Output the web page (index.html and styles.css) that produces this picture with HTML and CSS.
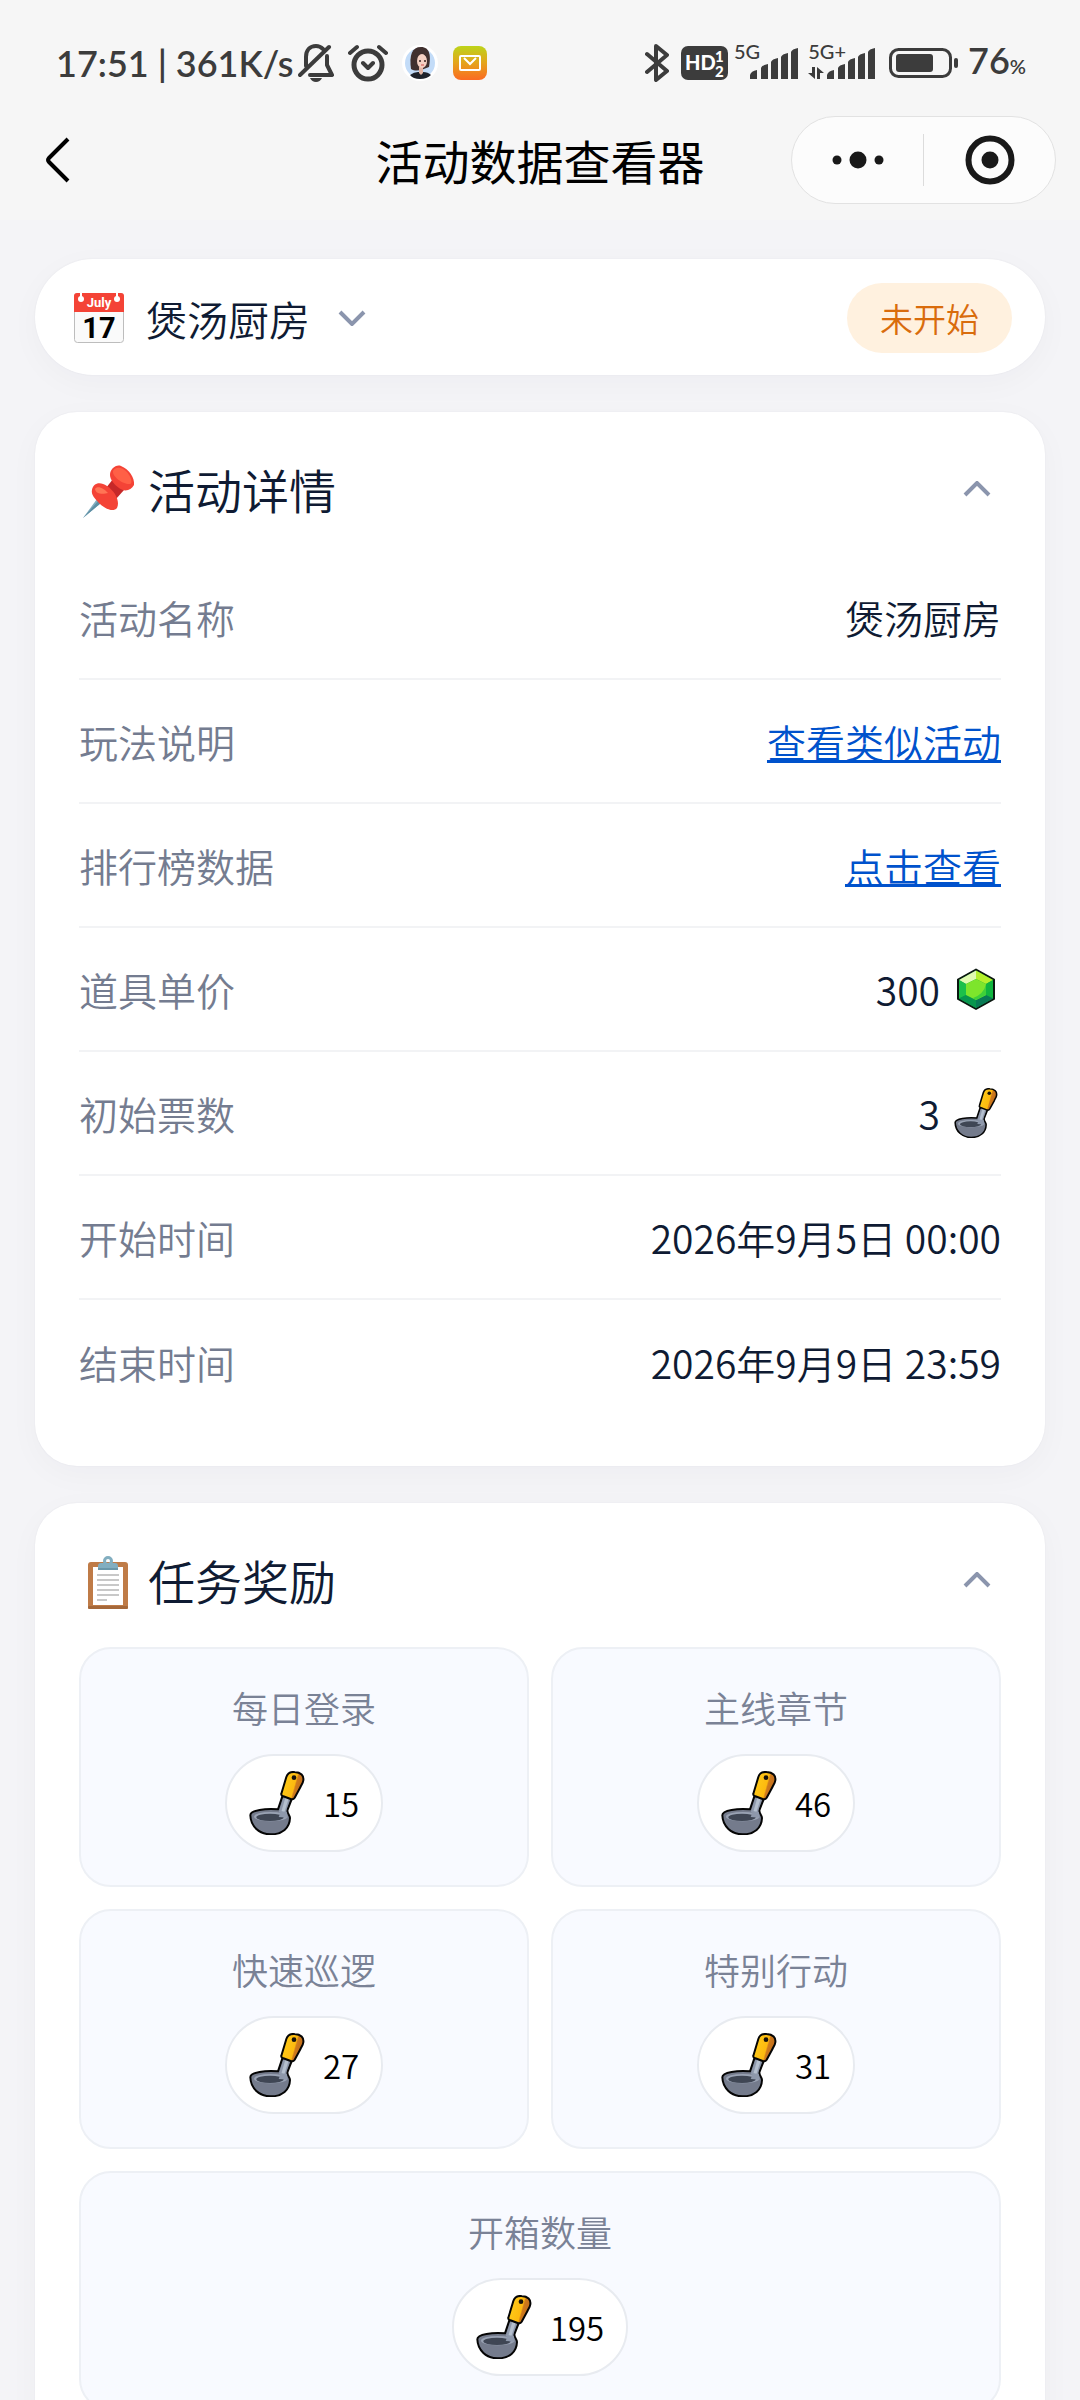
FILE: index.html
```html
<!DOCTYPE html>
<html lang="zh-CN">
<head>
<meta charset="utf-8">
<meta name="viewport" content="width=device-width, initial-scale=1">
<title>活动数据查看器</title>
<link rel="stylesheet" href="styles.css">
</head>
<body>
<svg class="defs" width="0" height="0" aria-hidden="true">
  <defs>
    <linearGradient id="handle" x1="0" y1="0" x2="1" y2="0.35">
      <stop offset="0" stop-color="#ffd21c"/><stop offset="0.68" stop-color="#fdb90f"/><stop offset="0.74" stop-color="#cf7a1c"/><stop offset="1" stop-color="#c06d1c"/>
    </linearGradient>
    <linearGradient id="mail" x1="0" y1="0" x2="0" y2="1">
      <stop offset="0" stop-color="#bdd41a"/><stop offset="0.5" stop-color="#e5a41c"/><stop offset="1" stop-color="#fb6a22"/>
    </linearGradient>
    <symbol id="ladle" viewBox="72 66 192 192">
      <path d="M184 142 L171 181 C135 178 87 183 88 199 C89 232 115 256 149 256 C184 256 206 237 207 207 C207 198 199 196 199 184 L213 148 Z" fill="#747b8c" stroke="#050505" stroke-width="6" stroke-linejoin="round"/>
      <path d="M188 143 L173 190 L196 196 C194 186 197 180 208 148 Z" fill="#8e98ab"/>
      <path d="M193 146 L181 188 L190 190 L203 149 Z" fill="#b4bfce"/>
      <ellipse cx="149" cy="203" rx="50" ry="14" fill="#9aa3b4"/>
      <ellipse cx="147" cy="205" rx="41" ry="11" fill="#3f4654"/>
      <path d="M173 204 L180 186 L198 190 L200 206 Z" fill="#8e98ab"/>
      <path d="M181 134 L196 84 C200 71 210 68 221 69 C240 70 249 80 247 94 C246 102 241 108 238 115 L221 146 C218 151 214 152 209 150 L185 141 C181 139 180 137 181 134 Z" fill="url(#handle)" stroke="#050505" stroke-width="6" stroke-linejoin="round"/>
      <circle cx="219" cy="86" r="7" fill="#17110a"/>
    </symbol>
    <symbol id="chevron" viewBox="0 0 28 16">
      <path d="M2 2 L14 14 L26 2" fill="none" stroke="#8b95ad" stroke-width="4"/>
    </symbol>
    <symbol id="signal" viewBox="0 0 48 31">
      <path d="M0 31V27Q1 23 7 22V31ZM11 31V20Q12 17 18 16V31ZM21 31V14Q22 11 28 10V31ZM31 31V9Q32 6 38 5V31ZM41 31V4Q42 1 48 0V31Z" fill="#3c3c3c"/>
    </symbol>
  </defs>
</svg>

<header class="top">
  <div class="status">
    <div class="status-side">
      <span class="clock">17:51 | 361K/s</span>
      <svg class="bell" width="36" height="38" viewBox="0 0 36 38" fill="none" stroke="#3c3c3c" stroke-width="4" stroke-linecap="round" stroke-linejoin="round">
        <path d="M8 22V13C8 6 12 2 18 2C21 2 23 3 25 5M29 12V21L34 31H12"/><path d="M31 3L2 31"/><path d="M12 34H24Q22 38 18 38T12 34Z" fill="#3c3c3c" stroke="none"/>
      </svg>
      <svg class="alarm" width="40" height="38" viewBox="0 0 40 38" fill="none" stroke="#3c3c3c" stroke-linecap="round" stroke-linejoin="round">
        <circle cx="20" cy="21" r="14" stroke-width="5"/><path d="M2 9L9 3M38 9L31 3M15 19L20 24L25 19" stroke-width="4"/>
      </svg>
      <svg class="avatar" width="36" height="36" viewBox="0 0 36 36">
        <circle cx="18" cy="18" r="18" fill="#fff"/><circle cx="18" cy="18" r="15" fill="#c3dcf8"/>
        <path d="M9 24C7 10 10 2 19 2C28 2 29 11 27 22C20 25 14 27 9 24Z" fill="#40302f"/>
        <path d="M8 30Q12 27 16 27L21 27Q26 27 29 30Q25 34 18 34T8 30Z" fill="#1e222b"/>
        <path d="M17 22H21V28L19 30L17 28Z" fill="#e3b5a4"/><ellipse cx="20" cy="16" rx="5" ry="7" fill="#f4d0c3"/>
        <path d="M12 19C12 10 18 9 20 7C22 10 26 11 26 17C29 6 24 3 19 3C13 3 10 8 12 19Z" fill="#40302f"/>
        <circle cx="18" cy="16" r="1" fill="#33211f"/><circle cx="23" cy="16" r="1" fill="#33211f"/><path d="M19 20H22" stroke="#d04c4c"/>
      </svg>
      <svg class="mail" width="34" height="34" viewBox="0 0 34 34">
        <rect width="34" height="34" rx="8" fill="url(#mail)"/><rect x="7" y="10" width="20" height="14" rx="1" fill="none" stroke="#fff" stroke-width="2"/><path d="M11 12L17 18L23 12" fill="none" stroke="#fff" stroke-width="2"/>
      </svg>
    </div>
    <div class="status-side">
      <svg width="24" height="38" viewBox="0 0 24 38" fill="none" stroke="#3c3c3c" stroke-width="4" stroke-linejoin="round" stroke-linecap="round"><path d="M2 10L22 27L11 36V2L22 11L2 28"/></svg>
      <svg class="hd" width="47" height="34" viewBox="0 0 47 34"><rect width="47" height="34" rx="7" fill="#3c3c3c"/><text x="4" y="24" class="hd-text">HD</text><text x="34" y="16" class="hd-num">1</text><text x="34" y="31" class="hd-num">2</text></svg>
      <span class="net">5G</span>
      <svg class="bars bars-one" width="48" height="31"><use href="#signal"/></svg>
      <span class="net net-two">5G+</span>
      <svg class="updown" width="16" height="12" viewBox="0 0 16 12"><path d="M4 0H7V12L0 6H4ZM9 12V0L16 6H12V12Z" fill="#3c3c3c"/></svg>
      <svg class="bars bars-two" width="48" height="31"><use href="#signal"/></svg>
      <svg class="battery" width="70" height="30" viewBox="0 0 70 30"><rect x="1.5" y="1.5" width="60" height="27" rx="8" fill="none" stroke="#3c3c3c" stroke-width="3"/><rect x="7" y="6" width="37" height="18" rx="3" fill="#3c3c3c"/><rect x="65" y="10" width="4" height="10" rx="2" fill="#3c3c3c"/></svg>
      <span class="percent">76<small>%</small></span>
    </div>
  </div>
  <nav class="nav">
    <button class="back" type="button" aria-label="返回"><svg width="24" height="46" viewBox="0 0 24 46"><path d="M22 2L3 21Q1 23 3 25L22 44" fill="none" stroke="#000" stroke-width="4"/></svg></button>
    <h1 class="nav-title">活动数据查看器</h1>
    <div class="capsule">
      <button type="button" aria-label="更多"><svg width="52" height="18" viewBox="0 0 52 18" fill="#191919"><circle cx="5" cy="9" r="4.5"/><circle cx="26" cy="9" r="8.5"/><circle cx="47" cy="9" r="4.5"/></svg></button>
      <button type="button" aria-label="关闭"><svg width="50" height="50" viewBox="0 0 50 50"><circle cx="25" cy="25" r="21.5" fill="none" stroke="#191919" stroke-width="6"/><circle cx="25" cy="25" r="8.5" fill="#191919"/></svg></button>
    </div>
  </nav>
</header>

<main class="content">
  <section class="picker">
    <label class="picker-label">
      <svg width="52" height="52" viewBox="0 0 52 52" role="img" aria-label="活动">
        <rect x="1.5" y="1.5" width="49" height="49" rx="3" fill="#fafafa" stroke="#bdbdbd"/><path d="M1 20V4Q1 1 4 1H48Q51 1 51 4V20Z" fill="#f44336"/>
        <path d="M8 0V7M44 0V7" stroke="#fff" stroke-width="2"/><circle cx="8" cy="7" r="3" fill="#fff"/><circle cx="44" cy="7" r="3" fill="#fff"/>
        <text x="26" y="15" text-anchor="middle" class="cal-month">July</text><text x="26" y="46" text-anchor="middle" class="cal-day">17</text>
      </svg>
      <select class="picker-select" aria-label="选择活动"><option>煲汤厨房</option></select>
      <svg class="chevron" width="28" height="16"><use href="#chevron"/></svg>
    </label>
    <span class="badge">未开始</span>
  </section>

  <section class="card">
    <div class="card-head">
      <h2 class="card-title">
        <svg width="58" height="58" viewBox="0 -2 58 58" aria-hidden="true">
          <path d="M4 56L18 37L22 41Z" fill="#82aec0"/><path d="M4 56L20 38L22 41Z" fill="#5d8ea3"/>
          <path d="M27 26L34 17L45 28L37 37Z" fill="#c62828"/>
          <path d="M13 28C14 21 21 19 28 24C37 30 41 40 38 46C34 51 25 46 20 41C15 36 12 32 13 28Z" fill="#f44336"/>
          <path d="M16 27C18 23 25 26 29 31C25 32 17 33 16 27Z" fill="#ff7555"/>
          <path d="M31 13C31 7 37 2 42 4C50 7 56 16 55 23C52 29 45 30 40 26C36 23 31 18 31 13Z" fill="#f44336"/>
          <path d="M34 9C37 4 43 5 48 10C52 15 54 21 51 22C45 23 33 15 34 9Z" fill="#ff6046"/>
        </svg>
        活动详情
      </h2>
      <button class="toggle" type="button" aria-label="收起活动详情" aria-expanded="true"><svg class="chevron up" width="28" height="16"><use href="#chevron"/></svg></button>
    </div>
    <dl class="rows">
      <div class="row"><dt>活动名称</dt><dd>煲汤厨房</dd></div>
      <div class="row"><dt>玩法说明</dt><dd><a href="#similar">查看类似活动</a></dd></div>
      <div class="row"><dt>排行榜数据</dt><dd><a href="#ranking">点击查看</a></dd></div>
      <div class="row"><dt>道具单价</dt><dd>300
        <svg width="50" height="50" viewBox="0 0 50 50" role="img" aria-label="宝石">
          <path d="M25 5.500L43 15.500V35L25 45L7 35V15.500Z" fill="#12a63f" stroke="#0b1710" stroke-width="2" stroke-linejoin="round"/>
          <path d="M25 6.500V15L15 20L8 16Z" fill="#e0fbb0"/><path d="M25 6.500L42 16L35 20L25 15Z" fill="#b4f02c"/>
          <path d="M8 16L15 20V31L8 34.500Z" fill="#1cc04a"/><path d="M42 16V34.500L35 31V20Z" fill="#10b53f"/>
          <path d="M8 34.500L15 31L25 36V44Z" fill="#08964e"/><path d="M42 34.500L35 31L25 36V44Z" fill="#087a55"/>
          <path d="M25 15L35 20V31L25 36L15 31V20Z" fill="#7de52c"/><path d="M35 20V31L25 36L22 34Q33 30 35 20Z" fill="#3fd03a"/>
        </svg></dd></div>
      <div class="row"><dt>初始票数</dt><dd>3 <svg width="50" height="50" role="img" aria-label="汤勺"><use href="#ladle"/></svg></dd></div>
      <div class="row"><dt>开始时间</dt><dd>2026年9月5日 00:00</dd></div>
      <div class="row"><dt>结束时间</dt><dd>2026年9月9日 23:59</dd></div>
    </dl>
  </section>

  <section class="card">
    <div class="card-head">
      <h2 class="card-title">
        <svg width="58" height="58" viewBox="0 -3 58 58" aria-hidden="true">
          <rect x="9" y="8" width="40" height="47" rx="3" fill="#bf7b47"/><rect x="9" y="52" width="40" height="3" rx="1" fill="#a5683a"/><path d="M14 13H44V51H14Z" fill="#fff"/>
          <path d="M18 21H40M18 26H40M18 31H40M18 36H40M18 41H40M18 46H28" stroke="#c8c8c8" stroke-width="2"/>
          <circle cx="29" cy="7" r="3.500" fill="none" stroke="#82aec0" stroke-width="3"/><path d="M19 16V12Q19 9 22 9H36Q39 9 39 12V16Z" fill="#82aec0"/><path d="M19 14H39V16H19Z" fill="#6a97aa"/>
        </svg>
        任务奖励
      </h2>
      <button class="toggle" type="button" aria-label="收起任务奖励" aria-expanded="true"><svg class="chevron up" width="28" height="16"><use href="#chevron"/></svg></button>
    </div>
    <ul class="tiles">
      <li class="tile"><span>每日登录</span><span class="pill"><svg width="64" height="64"><use href="#ladle"/></svg>15</span></li>
      <li class="tile"><span>主线章节</span><span class="pill"><svg width="64" height="64"><use href="#ladle"/></svg>46</span></li>
      <li class="tile"><span>快速巡逻</span><span class="pill"><svg width="64" height="64"><use href="#ladle"/></svg>27</span></li>
      <li class="tile"><span>特别行动</span><span class="pill"><svg width="64" height="64"><use href="#ladle"/></svg>31</span></li>
      <li class="tile wide"><span>开箱数量</span><span class="pill"><svg width="64" height="64"><use href="#ladle"/></svg>195</span></li>
    </ul>
  </section>
</main>
</body>
</html>
```
FILE: styles.css
```css
* { box-sizing: border-box; }

body {
  margin: 0;
  height: 100vh;
  display: flex;
  flex-direction: column;
  background: #f4f4f7;
  color: #0f1b33;
  font-family: "Noto Sans CJK SC", sans-serif;
  font-weight: 350;
}

svg { flex: none; display: block; }
.defs { position: absolute; }
button { border: 0; padding: 0; background: none; font: inherit; cursor: pointer; }
h1, h2, dl, dd, ul { margin: 0; padding: 0; font-weight: inherit; }

/* Status bar and navigation */
.top { flex: none; background: #f6f6f6; }

.status {
  height: 100px;
  padding: 26px 54px 0 56px;
  display: flex;
  justify-content: space-between;
  align-items: center;
  color: #3c3c3c;
  font-family: Lato, sans-serif;
}
.status-side { display: flex; align-items: center; }
.clock { font-size: 36px; line-height: 38px; font-weight: 600; white-space: nowrap; }
.bell { margin-left: 4px; }
.alarm { margin-left: 14px; }
.avatar { margin-left: 14px; }
.mail { margin-left: 15px; }
.hd { margin-left: 12px; }
.hd-text { font: 900 20px Lato, sans-serif; fill: #fff; }
.hd-num { font: 900 15px Lato, sans-serif; fill: #fff; }
.net { align-self: flex-start; margin-left: 6px; font-size: 20px; line-height: 20px; font-weight: 500; }
.bars-one { margin-left: -10px; }
.net-two { margin-left: 10px; }
.updown { margin: 20px 0 0 -38px; }
.bars-two { margin-left: 3px; }
.battery { margin-left: 14px; }
.percent { margin-left: 9px; font-size: 36px; line-height: 38px; font-weight: 600; }
.percent small { font-size: 20px; }

.nav {
  height: 120px;
  padding: 0 24px;
  display: grid;
  grid-template-columns: 1fr auto 1fr;
  align-items: center;
}
.back { justify-self: start; padding-left: 22px; }
.nav-title { color: #000; font-size: 47px; line-height: 70px; font-weight: 400; }
.capsule {
  justify-self: end;
  width: 265px;
  height: 88px;
  display: flex;
  align-items: center;
  border: 1px solid #e2e2e2;
  border-radius: 44px;
  background: #fcfcfc;
}
.capsule button { flex: 1; height: 52px; display: flex; align-items: center; justify-content: center; }
.capsule button + button { border-left: 1px solid #dcdcdc; }

/* Page content */
.content {
  flex: 1;
  min-height: 0;
  overflow-y: auto;
  scrollbar-width: none;
  padding: 39px 35px;
  display: flex;
  flex-direction: column;
  gap: 37px;
}
.content > section { flex: none; background: #fff; box-shadow: 0 8px 32px rgba(20, 20, 60, 0.03), 0 0 2px rgba(20, 20, 60, 0.06); }

.picker {
  height: 116px;
  padding: 2px 33px 0 38px;
  display: flex;
  align-items: center;
  justify-content: space-between;
  border-radius: 58px;
}
.picker-label { display: flex; align-items: center; }
.picker-select {
  appearance: none;
  margin: 0 28px 0 21px;
  padding: 0;
  border: 0;
  background: none;
  color: inherit;
  font: inherit;
  font-size: 41px;
  line-height: 60px;
}
.cal-month { font: 700 13px Roboto, sans-serif; fill: #fff; }
.cal-day { font: 700 29px Roboto, sans-serif; fill: #000; }
.up { transform: rotate(180deg); }
.badge {
  padding: 10px 33px;
  border-radius: 35px;
  background: #fff1df;
  color: #d96c0c;
  font-size: 33px;
  line-height: 50px;
}

.card { padding: 42px 44px; border-radius: 42px; }
.card-head { height: 70px; margin-bottom: 32px; display: flex; align-items: center; justify-content: space-between; }
.card-title { display: flex; align-items: center; gap: 11px; font-size: 47px; line-height: 70px; }
.toggle { padding: 20px 10px; }

.row { height: 124px; display: flex; align-items: center; justify-content: space-between; border-bottom: 2px solid #f2f3f5; font-size: 39px; line-height: 56px; }
.row:last-child { border-bottom: 0; }
.row dt { color: #747c90; }
.row dd { display: flex; align-items: center; gap: 11px; }
.row a { color: #0052cc; text-underline-offset: 2px; text-decoration-thickness: 3px; text-decoration-skip-ink: none; }

.tiles { list-style: none; display: grid; grid-template-columns: 1fr 1fr; gap: 22px; }
.tile {
  padding: 33px 0;
  display: flex;
  flex-direction: column;
  align-items: center;
  gap: 22px;
  border: 2px solid #edf0f5;
  border-radius: 32px;
  background: #f8faff;
  color: #7a8296;
  font-size: 36px;
  line-height: 50px;
}
.wide { grid-column: 1 / -1; }
.pill {
  height: 98px;
  padding: 0 22px 0 18px;
  display: flex;
  align-items: center;
  gap: 14px;
  border: 2px solid #e8ebf0;
  border-radius: 49px;
  background: #fff;
  color: #000;
  font-size: 33px;
}
```
